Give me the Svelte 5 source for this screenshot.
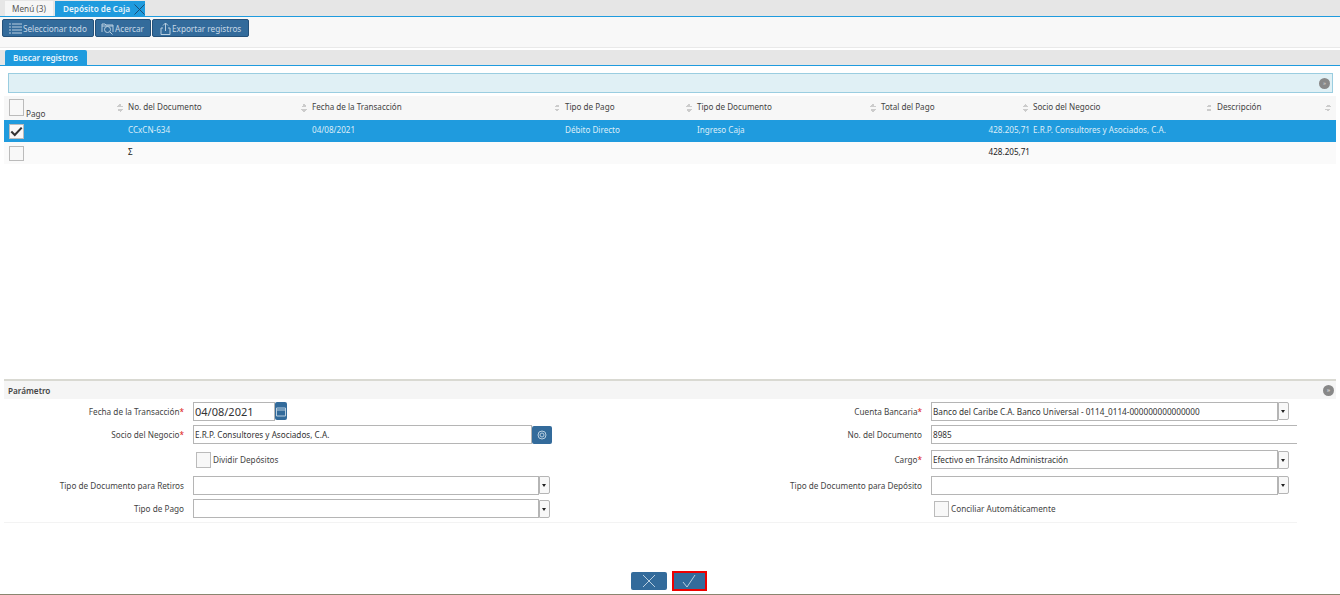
<script>
  let columns = [
    { label: "No. del Documento", width: 184 },
    { label: "Fecha de la Transacción", width: 253 },
    { label: "Tipo de Pago", width: 132 },
    { label: "Tipo de Documento", width: 184 },
    { label: "Total del Pago", width: 152 },
    { label: "Socio del Negocio", width: 184 },
    { label: "Descripción", width: 119 }
  ];
</script>

<div class="window">
  <div class="tabs">
    <div class="tab">Menú (3)</div>
    <div class="tab active">
      Depósito de Caja
      <svg class="tabClose" width="11" height="11" viewBox="0 0 11 11"><path d="M0.5 0.5L10.5 10.5M10.5 0.5L0.5 10.5" /></svg>
    </div>
  </div>

  <div class="toolbar">
    <button class="toolBtn select">
      <svg width="13" height="11" viewBox="0 0 13 11"><path d="M0 1h2M0 4h2M0 7h2M0 10h2M3 1h10M3 4h10M3 7h10M3 10h10" /></svg>
      Seleccionar todo
    </button>
    <button class="toolBtn zoom">
      <svg width="13" height="13" viewBox="0 0 13 13"><path d="M1 10V2h3l1 1h7v7M1 4h11" /><circle cx="6.5" cy="7.5" r="3" /><path d="M9 10l2.5 2.5" /></svg>
      Acercar
    </button>
    <button class="toolBtn export">
      <svg width="11" height="13" viewBox="0 0 11 13"><path d="M3 6H1v6.5h9V6H8M5.500 9V1M3 3.500L5.500 1L8 3.500" /></svg>
      Exportar registros
    </button>
  </div>

  <div class="subTabs">
    <div class="subTab">Buscar registros</div>
  </div>

  <div class="notice"><span class="dot">»</span></div>

  <div class="grid">
    <div class="row head">
      <div class="first">
        <span class="check big"></span>
        <span class="pago">Pago</span>
        <span class="sort"></span>
      </div>
      {#each columns as col}
        <div class="cell" style="width: {col.width}px">
          {col.label}
          <span class="sort"></span>
        </div>
      {/each}
    </div>
    <div class="row selected">
      <div class="first">
        <span class="check on">
          <svg width="15" height="13" viewBox="0 0 15 13"><path d="M1.500 6.500L5.500 10.500L13.500 2" /></svg>
        </span>
      </div>
      <div class="cell" style="width: 184px">CCxCN-634</div>
      <div class="cell" style="width: 253px">04/08/2021</div>
      <div class="cell" style="width: 132px">Débito Directo</div>
      <div class="cell" style="width: 184px">Ingreso Caja</div>
      <div class="cell num" style="width: 152px">428.205,71</div>
      <div class="cell" style="width: 184px">E.R.P. Consultores y Asociados, C.A.</div>
      <div class="cell" style="width: 119px"></div>
    </div>
    <div class="row total">
      <div class="first"><span class="check"></span></div>
      <div class="cell" style="width: 184px">Σ</div>
      <div class="cell" style="width: 253px"></div>
      <div class="cell" style="width: 132px"></div>
      <div class="cell" style="width: 184px"></div>
      <div class="cell num" style="width: 152px">428.205,71</div>
      <div class="cell" style="width: 184px"></div>
      <div class="cell" style="width: 119px"></div>
    </div>
  </div>

  <div class="panelHead">Parámetro <span class="dot">»</span></div>

  <div class="form">
    <label>Fecha de la Transacción<i>*</i></label>
    <div class="field">
      <input class="date" value="04/08/2021" />
      <button class="calBtn">
        <svg width="10" height="11" viewBox="0 0 10 11"><path d="M0.500 2h9v8h-9zM0.500 4h9" /></svg>
      </button>
    </div>
    <label>Cuenta Bancaria<i>*</i></label>
    <div class="field">
      <input class="wide" value="Banco del Caribe C.A. Banco Universal - 0114_0114-000000000000000" />
      <span class="arrow"></span>
    </div>

    <label>Socio del Negocio<i>*</i></label>
    <div class="field">
      <input class="socio" value="E.R.P. Consultores y Asociados, C.A." />
      <button class="searchBtn">
        <svg width="10" height="10" viewBox="0 0 10 10"><circle cx="5" cy="5" r="4" /><circle cx="5" cy="5" r="2" /></svg>
      </button>
    </div>
    <label>No. del Documento</label>
    <div class="field"><input class="open" value="8985" /></div>

    <label></label>
    <div class="field"><span class="check small"></span><span class="checkText">Dividir Depósitos</span></div>
    <label>Cargo<i>*</i></label>
    <div class="field">
      <input class="wide" value="Efectivo en Tránsito Administración" />
      <span class="arrow"></span>
    </div>

    <label>Tipo de Documento para Retiros</label>
    <div class="field"><input class="left" /><span class="arrow"></span></div>
    <label>Tipo de Documento para Depósito</label>
    <div class="field"><input class="wide" /><span class="arrow"></span></div>

    <label>Tipo de Pago</label>
    <div class="field"><input class="left" /><span class="arrow"></span></div>
    <label></label>
    <div class="field"><span class="check small"></span><span class="checkText">Conciliar Automáticamente</span></div>
  </div>

  <div class="actions">
    <button class="actionBtn">
      <svg width="14" height="14" viewBox="0 0 14 14"><path d="M1 1L13 13M13 1L1 13" /></svg>
    </button>
    <button class="actionBtn ok">
      <svg width="14" height="14" viewBox="0 0 14 14"><path d="M1 8L5 13L13 1" /></svg>
    </button>
  </div>
</div>

<style>
  :global(body) {
    margin: 0;
    background: white;
    overflow: hidden;
  }

  .window {
    display: flex;
    flex-direction: column;
    height: 595px;
    box-sizing: border-box;
    border-bottom: 1px solid #8a8670;
    font-family: "Noto Sans", "Open Sans", sans-serif;
    font-size: 8.2px;
    color: #333;
  }

  svg {
    fill: none;
    stroke: #b9cfe0;
    stroke-width: 1;
  }

  button {
    padding: 0;
    font-family: inherit;
  }

  .tabs {
    display: flex;
    gap: 2px;
    height: 15px;
    padding: 1px 0 0 5px;
    background: #e6e6e6;
    border-bottom: 1px solid #1f9bde;
  }

  .tab {
    display: flex;
    align-items: center;
    justify-content: center;
    width: 48px;
    background: #f6f6f6;
    color: #555;
  }

  .tab.active {
    position: relative;
    justify-content: flex-start;
    width: 82px;
    padding-left: 8px;
    background: #1f9bde;
    color: #e8f4fb;
    font-weight: 600;
  }

  .tabClose {
    position: absolute;
    right: 0;
    top: 3px;
    stroke: #1c4f78;
  }

  .toolbar {
    display: flex;
    gap: 1px;
    height: 31px;
    padding: 2px 0 0 2px;
    box-sizing: border-box;
    background: #f8f8f8;
    border-bottom: 1px solid #e9e9e9;
  }

  .toolBtn {
    display: flex;
    align-items: center;
    gap: 1px;
    box-sizing: border-box;
    height: 18px;
    padding: 0 0 0 6px;
    border: 1px solid #24517a;
    border-radius: 2px;
    background: #336b9b;
    color: #c7d8e6;
    font-size: 8.2px;
  }

  .select {
    width: 92px;
  }

  .zoom {
    width: 56px;
    padding-left: 5px;
  }

  .export {
    width: 97px;
    padding-left: 7px;
  }

  .subTabs {
    display: flex;
    height: 15px;
    margin-top: 2px;
    padding-left: 5px;
    background: #e6e6e6;
    border-bottom: 1px solid #1f9bde;
  }

  .subTab {
    width: 74px;
    padding-left: 8px;
    line-height: 15px;
    border-radius: 2px 2px 0 0;
    background: #1f9bde;
    color: #e8f4fb;
    font-weight: 600;
  }

  .notice {
    display: flex;
    align-items: center;
    justify-content: flex-end;
    height: 18px;
    margin: 7px 7px 3px 8px;
    padding-right: 2px;
    border: 1px solid #9acde0;
    background: #e0f0f5;
  }

  .dot {
    display: inline-block;
    width: 11px;
    height: 11px;
    border-radius: 50%;
    background: #888;
    color: #ddd;
    font-size: 6px;
    line-height: 10px;
    text-align: center;
  }

  .grid {
    flex: 1;
    margin: 0 4px;
  }

  .row {
    display: flex;
    align-items: center;
    height: 22px;
    background: #fafafa;
  }

  .row.head {
    height: 24px;
    background: #f7f7f7;
    color: #444;
  }

  .row.selected {
    background: #1f9bde;
    color: #dcedf8;
  }

  .row.total {
    color: #222;
  }

  .first {
    position: relative;
    display: flex;
    align-items: center;
    width: 124px;
    height: 100%;
    padding-left: 5px;
    box-sizing: border-box;
    flex: none;
  }

  .cell {
    position: relative;
    flex: none;
    box-sizing: border-box;
    padding-bottom: 3px;
    font-size: 8.1px;
    white-space: nowrap;
  }

  .num {
    text-align: right;
    padding-right: 3px;
  }

  .check {
    display: block;
    width: 13px;
    height: 13px;
    border: 1px solid #bbb;
    background: #f8f8f8;
    flex: none;
  }

  .check.big {
    width: 13px;
    height: 15px;
    margin-top: -2px;
  }

  .check.on {
    display: flex;
    align-items: center;
    justify-content: center;
  }

  .check.on svg {
    stroke: #333;
    stroke-width: 2.4;
  }

  .check.small {
    width: 13px;
    height: 14px;
    margin-left: 3px;
  }

  .pago {
    margin: 10px 0 0 2px;
  }

  .sort {
    position: absolute;
    right: 5px;
    top: 50%;
    width: 6px;
    height: 8px;
    margin-top: -4px;
    background:
      linear-gradient(to bottom right, transparent 50%, #ccc 50%) left top / 3px 3px no-repeat,
      linear-gradient(to bottom left, transparent 50%, #ccc 50%) right top / 3px 3px no-repeat,
      linear-gradient(to top right, transparent 50%, #ccc 50%) left bottom / 3px 3px no-repeat,
      linear-gradient(to top left, transparent 50%, #ccc 50%) right bottom / 3px 3px no-repeat;
  }

  .panelHead {
    display: flex;
    align-items: center;
    justify-content: space-between;
    height: 18px;
    margin: 0 4px;
    padding: 0 4px;
    border-top: 2px solid #d9d9d2;
    background: #f5f5f5;
    font-weight: 600;
    color: #444;
  }

  .panelHead .dot {
    margin-right: -2px;
  }

  .form {
    display: grid;
    grid-template-columns: 180px 370px 368px 375px;
    grid-template-rows: 24px 23px 27px 24px 23px;
    align-items: center;
    width: 1293px;
    margin: 0 0 49px 4px;
    padding-bottom: 2px;
    border-bottom: 1px solid #f3f3f3;
  }

  label {
    text-align: right;
    color: #444;
  }

  label i {
    color: #d22;
    font-style: normal;
  }

  .field {
    display: flex;
    align-items: center;
    padding-left: 9px;
  }

  input {
    box-sizing: border-box;
    height: 19px;
    padding: 0 1px;
    border: 1px solid #b5b5b5;
    border-radius: 0;
    background: white;
    color: #333;
    font-family: inherit;
    font-size: 8.2px;
    outline: none;
  }

  input.date {
    width: 82px;
    font-size: 11px;
  }

  input.socio {
    width: 339px;
  }

  input.wide {
    width: 347px;
  }

  input.left {
    width: 346px;
  }

  input.open {
    width: 366px;
    border-right: none;
  }

  .calBtn {
    display: flex;
    align-items: center;
    justify-content: center;
    width: 12px;
    height: 18px;
    border: none;
    border-radius: 2px;
    background: #336b9b;
  }

  .searchBtn {
    display: flex;
    align-items: center;
    justify-content: center;
    width: 20px;
    height: 18px;
    border: none;
    border-radius: 2px;
    background: #336b9b;
  }

  .arrow {
    position: relative;
    box-sizing: border-box;
    width: 11px;
    height: 18px;
    border: 1px solid #b5b5b5;
    border-radius: 0 2px 2px 0;
    background: #f8f8f8;
  }

  .arrow::after {
    content: "";
    position: absolute;
    left: 2px;
    top: 7px;
    border: 2px solid transparent;
    border-top: 3px solid #222;
    border-bottom: none;
  }

  .checkText {
    margin-left: 2px;
    color: #444;
  }

  .actions {
    display: flex;
    align-items: center;
    justify-content: center;
    gap: 5px;
    height: 18px;
    margin-bottom: 4px;
    padding-right: 3px;
  }

  .actionBtn {
    display: flex;
    align-items: center;
    justify-content: center;
    box-sizing: border-box;
    width: 36px;
    height: 18px;
    border: none;
    border-radius: 2px;
    background: #336b9b;
  }

  .actionBtn.ok {
    width: 35px;
    height: 20px;
    border: 2px solid #ee0000;
    border-radius: 0;
  }
</style>
